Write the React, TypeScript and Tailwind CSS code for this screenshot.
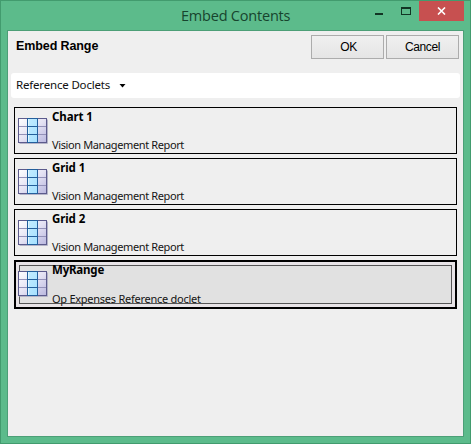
import React from "react";

const ui = "font-['Noto_Sans','Open_Sans',sans-serif]";

function GridIcon({ id }: { id: string }) {
  return (
    <svg width="30" height="26" viewBox="0 0 30 26" className="block shrink-0">
      <defs>
        <linearGradient id={id} x1="0" y1="0" x2="1" y2="1">
          <stop offset="0" stopColor="#ffffff" />
          <stop offset="0.5" stopColor="#e4e2f3" />
          <stop offset="1" stopColor="#b9b7df" />
        </linearGradient>
        <linearGradient id={id + "-mid"} x1="0" y1="0" x2="1" y2="1">
          <stop offset="0" stopColor="#c4ecff" />
          <stop offset="1" stopColor="#a4e0ff" />
        </linearGradient>
      </defs>
      <path d="M1.5 25.5H29.5V1.5" fill="none" stroke="#b4b4c8" />
      <rect x="0.5" y="0.5" width="28" height="24" fill={`url(#${id})`} stroke="#5c5b8c" />
      <path d="M1 8.5H28M1 16.5H28" stroke="#9391b8" />
      <rect x="9" y="0" width="11" height="25" fill={`url(#${id}-mid)`} />
      <path d="M9.5 0V25M19.5 0V25M9 8.5H20M9 16.5H20M9 24.5H20M9 0.5H20" fill="none" stroke="#235f9c" />
      <path d="M10.5 1V8M10.5 9V16M10.5 17V24" stroke="#dff6ff" />
    </svg>
  );
}

function ItemText({ title, detail, titleClass, detailClass }: { title: string; detail: string; titleClass: string; detailClass: string }) {
  return (
    <div className={`flex flex-col text-black ${ui}`}>
      <span className={`block h-[14px] whitespace-nowrap text-[11.5px] leading-[14px] font-bold ${titleClass}`}>{title}</span>
      <span className={`block h-[14px] whitespace-nowrap text-[11px] leading-[14px] text-[#151515] ${detailClass}`}>{detail}</span>
    </div>
  );
}

const items = [
  { title: "Chart 1", id: "chart1" },
  { title: "Grid 1", id: "grid1" },
  { title: "Grid 2", id: "grid2" },
];

export default function App() {
  return (
    <div className="flex h-[444px] w-[471px] flex-col overflow-hidden border border-[#429b6e] bg-[#5cbb8b]">
      <header className="flex h-[29px] shrink-0">
        <div className="w-[180px]" />
        <h1 className="w-[186px] pt-[5px] font-['Open_Sans','Noto_Sans',sans-serif] text-[14.5px] leading-[20px] tracking-[-0.21px] whitespace-nowrap text-[#17442e]">Embed Contents</h1>
        <svg width="52" height="20" viewBox="367 1 52 20" className="block shrink-0">
          <path d="M375 13H383V15H375Z" fill="#123524" />
          <path d="M401 7H411V15H401ZM402 9V14H410V9Z" fillRule="evenodd" fill="#123524" />
        </svg>
        <div className="flex h-[20px] w-[45px] items-center justify-center bg-[#c75050]">
          <svg width="9" height="8" viewBox="0 0 9 8"><path d="M1 0.5L8 7.5M8 0.5L1 7.5" stroke="#fff" strokeWidth="1.6" /></svg>
        </div>
      </header>
      <main className="ml-[6px] flex h-[407px] w-[457px] shrink-0 flex-col border border-[#4c9f77] bg-[#efefef]">
        <div className="flex h-[42px] shrink-0 pt-[4px] pl-[8px]">
          <div className="w-[295px] pt-[3px] font-['Liberation_Sans',Arial,sans-serif] text-[12.5px] leading-[16px] font-bold tracking-[-0.1px] text-black">Embed Range</div>
          <div className="flex gap-[2px] font-['Liberation_Sans',Arial,sans-serif] text-[12px] text-black">
            <button className="flex h-[24px] w-[73px] items-center justify-center border border-[#acacac] bg-linear-to-b from-[#f0f0f0] to-[#e5e5e5] pl-[2px] tracking-[-0.3px]">OK</button>
            <button className="flex h-[24px] w-[73px] items-center justify-center border border-[#acacac] bg-linear-to-b from-[#f0f0f0] to-[#e5e5e5] tracking-[-0.4px]">Cancel</button>
          </div>
        </div>
        <div className={`ml-[3px] flex h-[25px] w-[449px] shrink-0 items-center rounded-[3px] bg-white pb-px pl-[5px] text-[11.5px] leading-[16px] tracking-[-0.18px] text-[#111] ${ui}`}>
          <span className="w-[103px] whitespace-nowrap">Reference Doclets</span>
          <svg width="7" height="4" viewBox="0 0 7 4" className="mt-px block"><path d="M0.5 0H6.5L3.5 3.5Z" fill="#000" /></svg>
        </div>
        <div className="mt-[9px] ml-[6px] flex w-[443px] flex-col gap-[4px]">
          {items.map((item) => (
            <section key={item.id} className="flex h-[47px] shrink-0 gap-[4px] border border-black pt-[2px] pl-[3px]">
              <div className="pt-[8px]"><GridIcon id={item.id} /></div>
              <ItemText title={item.title} detail="Vision Management Report" titleClass="tracking-[-0.1px]" detailClass="mt-[14px] tracking-[-0.38px]" />
            </section>
          ))}
          <section className="relative flex h-[49px] shrink-0 gap-[4px] border-2 border-black bg-[#e8e4e7] pl-[2px]">
            <div className="absolute top-[3px] left-[3px] h-[39px] w-[433px] border border-[#555] bg-[#e1e1e1]" />
            <div className="relative pt-[9px]"><GridIcon id="range" /></div>
            <div className="relative pt-[1px]"><ItemText title="MyRange" detail="Op Expenses Reference doclet" titleClass="tracking-[-0.2px]" detailClass="mt-[15px] tracking-[-0.26px]" /></div>
          </section>
        </div>
      </main>
    </div>
  );
}
